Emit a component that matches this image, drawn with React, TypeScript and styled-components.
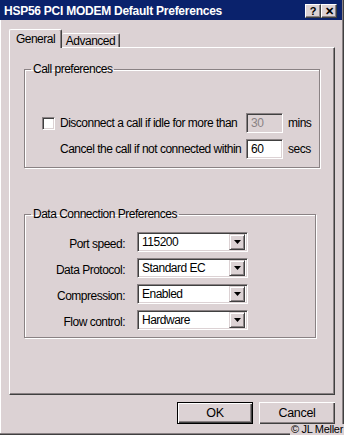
import React from "react";
import styled, { createGlobalStyle } from "styled-components";

const BG = "#dcd2d4";
const DARK = "#404040";
const SHADOW = "#8a8284";

const Global = createGlobalStyle`
  html, body { margin: 0; padding: 0; background: ${BG}; }
  * { box-sizing: border-box; }
`;

const Window = styled.div`
  position: relative;
  width: 344px;
  height: 435px;
  background: ${BG};
  box-shadow: inset -1px -1px 0 ${DARK}, inset -2px -2px 0 ${SHADOW}, inset 1px 0 0 #fff;
  font-family: "Liberation Sans", Arial, sans-serif;
  font-size: 12px;
  letter-spacing: -0.5px;
  color: #000;
  display: flex;
  flex-direction: column;
  overflow: hidden;
`;

const TitleBar = styled.div`
  height: 20px;
  margin-right: 2px;
  background: #0a226c;
  color: #fff;
  display: flex;
  align-items: center;
  justify-content: space-between;
  padding: 2px 5px 0 4px;
`;

const TitleText = styled.span`
  font-weight: bold;
  font-size: 12px;
  letter-spacing: -0.25px;
  white-space: nowrap;
`;

const TitleButtons = styled.div`
  display: flex;
  gap: 0;
`;

const CaptionButton = styled.div`
  width: 16px;
  height: 14px;
  background: ${BG};
  border-top: 1px solid #fff;
  border-left: 1px solid #fff;
  border-right: 1px solid ${DARK};
  border-bottom: 1px solid ${DARK};
  box-shadow: inset -1px -1px 0 ${SHADOW};
  color: #000;
  font-weight: bold;
  font-size: 11px;
  letter-spacing: 0;
  line-height: 12px;
  text-align: center;
`;

const Body = styled.div`
  flex: 1;
  padding: 9px 9px 0 9px;
  display: flex;
  flex-direction: column;
`;

const TabStrip = styled.div`
  display: flex;
  align-items: flex-end;
  height: 18px;
  position: relative;
  z-index: 1;
`;

const Tab = styled.div<{ $active?: boolean }>`
  height: ${(p) => (p.$active ? "19px" : "14px")};
  margin-bottom: ${(p) => (p.$active ? "-1px" : "0")};
  width: ${(p) => (p.$active ? "53px" : "58px")};
  background: ${BG};
  border-top: 1px solid #fff;
  border-left: ${(p) => (p.$active ? "1px solid #fff" : "none")};
  border-right: 1px solid ${DARK};
  border-radius: 2px 2px 0 0;
  box-shadow: inset -1px 0 0 ${SHADOW};
  display: flex;
  align-items: ${(p) => (p.$active ? "flex-start" : "center")};
  justify-content: center;
  padding-top: ${(p) => (p.$active ? "2px" : "0")};
  white-space: nowrap;
`;

const Panel = styled.div`
  height: 348px;
  border-top: 1px solid #fff;
  border-left: 1px solid #fff;
  border-right: 1px solid ${DARK};
  border-bottom: 1px solid ${DARK};
  box-shadow: inset -1px -1px 0 ${SHADOW};
  display: flex;
  flex-direction: column;
  padding: 0 0 0 14px;
`;

const Group = styled.fieldset<{ $w: number; $top: number; $h: number }>`
  margin: ${(p) => p.$top}px 0 0 0;
  width: ${(p) => p.$w}px;
  height: ${(p) => p.$h}px;
  border: 1px solid ${SHADOW};
  box-shadow: 1px 1px 0 #fff, inset 1px 1px 0 #fff;
  padding: 0;
  min-width: 0;
`;

const Legend = styled.legend`
  margin-left: 6px;
  padding: 0 2px;
  line-height: 13px;
`;

const CallGrid = styled.div`
  display: grid;
  grid-template-columns: 13px 181px 37px auto;
  column-gap: 5px;
  row-gap: 6px;
  align-items: center;
  padding: 37px 0 0 17px;
`;

const CheckBox = styled.div`
  width: 13px;
  height: 13px;
  background: #fff;
  border-top: 1px solid ${SHADOW};
  border-left: 1px solid ${SHADOW};
  border-right: 1px solid #fff;
  border-bottom: 1px solid #fff;
  box-shadow: inset 1px 1px 0 ${DARK}, inset -1px -1px 0 ${BG};
`;

const FieldLabel = styled.span<{ $col?: number }>`
  grid-column: ${(p) => p.$col ?? "auto"};
  white-space: nowrap;
`;

const Input = styled.div<{ $disabled?: boolean }>`
  height: 20px;
  background: ${(p) => (p.$disabled ? BG : "#fff")};
  color: ${(p) => (p.$disabled ? "#8a8284" : "#000")};
  border-top: 1px solid ${SHADOW};
  border-left: 1px solid ${SHADOW};
  border-right: 1px solid #fff;
  border-bottom: 1px solid #fff;
  box-shadow: inset 1px 1px 0 ${DARK}, inset -1px -1px 0 ${BG};
  padding: 0 0 0 4px;
  display: flex;
  align-items: center;
`;

const DataGrid = styled.div`
  display: grid;
  grid-template-columns: 100px 111px;
  column-gap: 12px;
  row-gap: 6px;
  align-items: center;
  padding: 11px 0 0 0;
`;

const RightLabel = styled.span`
  text-align: right;
  white-space: nowrap;
  padding-top: 4px;
`;

const Combo = styled.div`
  height: 20px;
  background: #fff;
  border-top: 1px solid ${SHADOW};
  border-left: 1px solid ${SHADOW};
  border-right: 1px solid #fff;
  border-bottom: 1px solid #fff;
  box-shadow: inset 1px 1px 0 ${DARK}, inset -1px -1px 0 ${BG};
  padding: 2px 2px 2px 4px;
  display: flex;
  align-items: center;
  justify-content: space-between;
`;

const DropButton = styled.div`
  width: 16px;
  height: 16px;
  background: ${BG};
  border-top: 1px solid ${BG};
  border-left: 1px solid ${BG};
  border-right: 1px solid ${DARK};
  border-bottom: 1px solid ${DARK};
  box-shadow: inset 1px 1px 0 #fff, inset -1px -1px 0 ${SHADOW};
  display: flex;
  align-items: center;
  justify-content: center;
`;

const ButtonRow = styled.div`
  display: flex;
  justify-content: flex-end;
  gap: 6px;
  margin-top: 7px;
`;

const Button = styled.div<{ $default?: boolean; $w: number }>`
  width: ${(p) => p.$w}px;
  height: 22px;
  background: ${BG};
  border: ${(p) => (p.$default ? `1px solid #000` : "none")};
  box-shadow: inset 1px 1px 0 #fff, inset -1px -1px 0 ${DARK}, inset -2px -2px 0 ${SHADOW};
  display: flex;
  align-items: center;
  justify-content: center;
  font-size: 12.5px;
  letter-spacing: -0.3px;
`;

const Copyright = styled.div`
  position: absolute;
  right: 0;
  bottom: 0;
  font-size: 11px;
  letter-spacing: -0.3px;
  color: #000;
  background: ${BG};
  padding: 0 1px;
  line-height: 11px;
  white-space: nowrap;
`;

const Arrow = () => (
  <svg width="7" height="4" viewBox="0 0 7 4">
    <path d="M0 0h7L3.5 4z" fill="#000" />
  </svg>
);

const combos: [string, string][] = [
  ["Port speed:", "115200"],
  ["Data Protocol:", "Standard EC"],
  ["Compression:", "Enabled"],
  ["Flow control:", "Hardware"],
];

export default function App() {
  return (
    <>
      <Global />
      <Window>
        <TitleBar>
          <TitleText>HSP56 PCI MODEM Default Preferences</TitleText>
          <TitleButtons>
            <CaptionButton>?</CaptionButton>
            <CaptionButton>✕</CaptionButton>
          </TitleButtons>
        </TitleBar>
        <Body>
          <TabStrip>
            <Tab $active>General</Tab>
            <Tab>Advanced</Tab>
          </TabStrip>
          <Panel>
            <Group $w={296} $top={15} $h={105}>
              <Legend>Call preferences</Legend>
              <CallGrid>
                <CheckBox />
                <FieldLabel>Disconnect a call if idle for more than</FieldLabel>
                <Input $disabled>30</Input>
                <FieldLabel>mins</FieldLabel>
                <FieldLabel $col={2}>Cancel the call if not connected within</FieldLabel>
                <Input>60</Input>
                <FieldLabel>secs</FieldLabel>
              </CallGrid>
            </Group>
            <Group $w={292} $top={40} $h={130}>
              <Legend>Data Connection Preferences</Legend>
              <DataGrid>
                {combos.map(([label, value]) => (
                  <React.Fragment key={label}>
                    <RightLabel>{label}</RightLabel>
                    <Combo>
                      <span>{value}</span>
                      <DropButton>
                        <Arrow />
                      </DropButton>
                    </Combo>
                  </React.Fragment>
                ))}
              </DataGrid>
            </Group>
          </Panel>
          <ButtonRow>
            <Button $default $w={76}>OK</Button>
            <Button $w={76}>Cancel</Button>
          </ButtonRow>
        </Body>
        <Copyright>© JL Meller</Copyright>
      </Window>
    </>
  );
}
